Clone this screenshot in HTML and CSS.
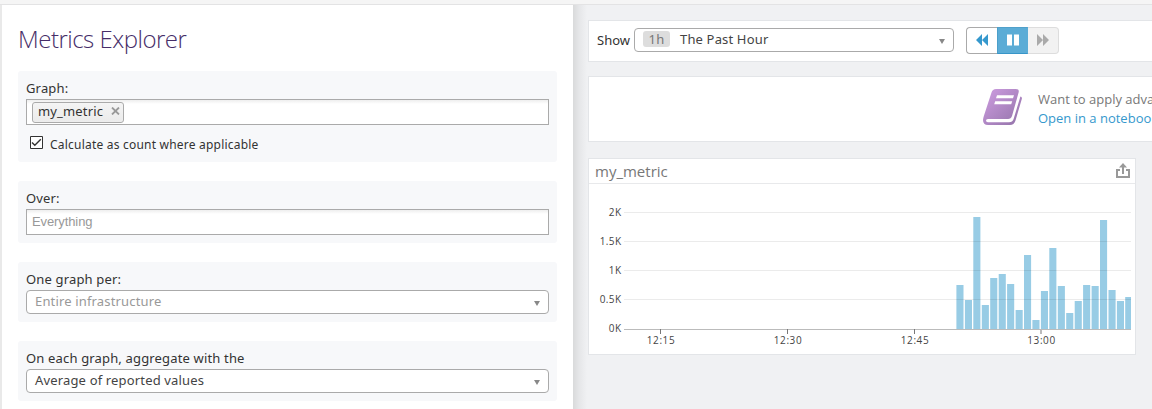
FILE: index.html
```html
<!DOCTYPE html>
<html lang="en">
<head>
<meta charset="utf-8">
<title>Metrics Explorer</title>
<link rel="stylesheet" href="styles.css">
</head>
<body>
<div class="topbar"></div>
<div class="page">
  <main class="editor">
    <h1 class="title">Metrics Explorer</h1>
    <section class="field field-graph">
      <div class="label">Graph:</div>
      <div class="input"><span class="tag"><span class="tag-name">my_metric</span><svg class="tag-x" width="9" height="8" viewBox="0 0 9 8"><path d="M1 .5l7 7M8 .5l-7 7"/></svg></span></div>
      <div class="check"><svg width="13" height="13" viewBox="0 0 13 13"><path class="box" d="M.5 .5h12v12H.5z"/><path class="tick" d="M2 6.500L4.800 9.200l6-6"/></svg><span class="check-text">Calculate as count where applicable</span></div>
    </section>
    <section class="field field-over">
      <div class="label">Over:</div>
      <div class="input"><span class="placeholder">Everything</span></div>
    </section>
    <section class="field">
      <div class="label">One graph per:</div>
      <div class="select"><span class="muted">Entire infrastructure</span><i class="caret"></i></div>
    </section>
    <section class="field">
      <div class="label">On each graph, aggregate with the</div>
      <div class="select"><span class="agg-value">Average of reported values</span><i class="caret"></i></div>
    </section>
  </main>
  <aside class="results">
    <div class="card timebar">
      <span class="show">Show</span>
      <div class="select range"><span class="badge">1h</span><span class="range-text">The Past Hour</span><i class="caret"></i></div>
      <div class="controls">
        <span class="btn back"><svg width="12" height="12" viewBox="0 0 12 12"><path d="M6 0v12L0 6zM12 0v12L6 6z"/></svg></span>
        <span class="btn pause"><svg width="12" height="12" viewBox="0 0 12 12"><path d="M0 .5h5v11H0zM7 .5h5v11H7z"/></svg></span>
        <span class="btn next"><svg width="12" height="12" viewBox="0 0 12 12"><path d="M0 0v12l6-6zM6 0v12l6-6z"/></svg></span>
      </div>
    </div>
    <div class="card notebook">
      <svg class="book" width="40" height="37" viewBox="0 0 40 37">
        <defs><linearGradient id="violet" x1="0" y1="0" x2="1" y2="1"><stop offset="0" stop-color="#cf9ee2"/><stop offset="1" stop-color="#9272a8"/></linearGradient></defs>
        <path fill="url(#violet)" d="M13 0h20q3.500 0 2.600 3.500L29 27q-1 3-4 3H5q-2 0-2 1.600T5 33.200h21q3.500 0 4.500-3L37.400 7.500q2 .5 1.400 2.500L32.500 31.500Q31 36 27 36H5Q0 36 0 31q0-1.500 1-4.500L8.500 3.500Q9.500 0 13 0z"/>
        <path fill="#fff" d="M14 6.300h17l-1 2.900H13zM12.200 12.300h17l-1 2.900h-17z"/>
      </svg>
      <div class="promo"><span class="want">Want to apply adva</span><span class="open">Open in a noteboo</span></div>
    </div>
    <div class="card chart-card">
      <div class="chart-head"><span class="chart-title">my_metric</span>
        <svg class="share" width="16" height="16" viewBox="0 0 16 16"><path class="tray" d="M5 7H2v7h12V7h-3"/><path class="tray" d="M8 11V3"/><path class="tip" d="M8 0l4 4.500H4z"/></svg>
      </div>
      <svg class="chart" width="546" height="170" viewBox="589 184 546 170">
        <g class="bars">
          <path d="M956.400 285h7.100v44h-7.100zM964.900 300h7.100v29h-7.100zM973.300 217h7.100v112h-7.100zM981.800 305h7.100v24h-7.100zM990.200 278h7.100v51h-7.100zM998.700 274h7.100v55h-7.100zM1007.100 284h7.100v45h-7.100zM1015.600 310h7.100v19h-7.100zM1024 255h7.100v74h-7.100zM1032.400 320h7.100v9h-7.100zM1040.900 291h7.100v38h-7.100zM1049.300 248h7.100v81h-7.100zM1057.800 286h7.100v43h-7.100zM1066.200 313h7.100v16h-7.100zM1074.700 301h7.100v28h-7.100zM1083.100 285h7.100v44h-7.100zM1091.600 286h7.100v43h-7.100zM1100 220h7.100v109h-7.100zM1108.500 290h7.100v39h-7.100zM1116.900 301h7.100v28h-7.100zM1125.200 297h5.800v32h-5.800z"/>
        </g>
        <path class="grid" d="M624 212.500h507M624 241.500h507M624 270.500h507M624 299.500h507"/>
        <path class="axis" d="M624 329.500h507"/>
        <path class="ticks" d="M660.500 329v5M787.500 329v5M914.500 329v5"/>
        <path class="tick-soft" d="M1041 329v5"/>
        <g class="ylab"><text x="621.500" y="216">2K</text><text x="621.500" y="245">1.5K</text><text x="621.500" y="274">1K</text><text x="621.500" y="303">0.5K</text><text x="621.500" y="332">0K</text></g>
        <g class="xlab"><text x="661" y="344">12:15</text><text x="788" y="344">12:30</text><text x="915" y="344">12:45</text><text x="1041.500" y="344">13:00</text></g>
      </svg>
    </div>
  </aside>
</div>
</body>
</html>
```
FILE: styles.css
```css
* { box-sizing: border-box; }
body { margin: 0; width: 1152px; height: 409px; overflow: hidden; background: #f0f1f3; color: #333; font: 13px/16px "Noto Sans", "Open Sans", sans-serif; letter-spacing: .16px; white-space: nowrap; }
svg { display: block; flex: none; }
.topbar { height: 5px; background: #f5f5f5; border-bottom: 1px solid #e3e3e4; }
.page { display: flex; height: 404px; }
.editor { width: 573px; flex: none; padding: 0 16px; border-left: 2px solid #e9e9e9; background: #fff; }
.title { margin: 0; height: 66px; padding-top: 18px; font: 300 24px/32px "Open Sans", sans-serif; letter-spacing: -.5px; color: #462d68; }
.field { height: 60px; margin-bottom: 19px; padding: 9px 8px 0; border-radius: 3px; background: #f7f8fa; }
.field-graph { height: 91px; }
.field-over { height: 62px; }
.label { height: 19px; line-height: 16px; }
.input { height: 26px; display: flex; align-items: center; border: 1px solid #aaa; background: linear-gradient(#eee, #fff 4px); padding-left: 5px; }
.tag { height: 21px; width: 92px; display: flex; justify-content: space-between; padding: 0 3px 0 5px; border: 1px solid #aaa; border-radius: 3px; background: linear-gradient(#f4f4f4, #ebebeb); box-shadow: inset 0 0 1px #fff; }
.tag-name { line-height: 17px; }
.tag-x { margin-top: 4px; stroke: #999; stroke-width: 1.8; fill: none; }
.placeholder { font: 13px/20px "Liberation Sans", sans-serif; letter-spacing: -.1px; color: #999; margin-bottom: 1px; }
.check { display: flex; padding: 11px 0 0 4px; gap: 7px; }
.check svg { fill: #fff; stroke: #333; }
.check .tick { stroke-width: 1.4; fill: none; }
.check-text { font-size: 12px; line-height: 17px; letter-spacing: .21px; }
.select { height: 24px; display: flex; align-items: center; border: 1px solid #aaa; border-radius: 4px; background: #fff; padding: 0 8px; color: #444; }
.select > span { margin-top: -2px; }
.muted { color: #999; }
.caret { margin-left: auto; border: solid transparent; border-width: 5px 3px 0; border-top-color: #888; margin-top: 2px; }
.results { flex: 1; min-width: 0; padding: 15px 0 0 15px; background: linear-gradient(90deg, #d9dadb, #e5e6e8 6px, #f0f1f3 14px); }
.card { width: 580px; border: 1px solid #e3e5e8; background: #fff; }
.timebar { height: 42px; margin-bottom: 14px; display: flex; align-items: center; padding: 0 0 2px 8px; }
.show { width: 37px; letter-spacing: 0; }
.range { width: 320px; }
.badge { width: 27px; height: 16px; border-radius: 3px; background: #ddd; color: #777; text-align: center; line-height: 16px; margin-right: 10px; }
.controls { display: flex; margin-left: 12px; height: 27px; }
.btn { width: 31px; display: flex; align-items: center; justify-content: center; border: 1px solid #aaa; }
.back { fill: #3598cd; border-right: 0; border-radius: 4px 0 0 4px; }
.pause { fill: #fff; background: #5bacd6; border-color: #50a0ca #5bacd6 #3795c8 #4b9fca; }
.next { fill: #aaa; background: #f2f2f2; border-color: #ddd; border-left: 0; border-radius: 0 4px 4px 0; }
.notebook { height: 66px; margin-bottom: 16px; padding: 12px 0 0 394px; display: flex; }
.promo { margin: 1px 0 0 15px; display: flex; flex-direction: column; font: 13px/19px "Open Sans", sans-serif; letter-spacing: 0; color: #777; }
.open { color: #3598cd; }
.chart-card { width: 548px; height: 197px; }
.chart-head { height: 25px; display: flex; justify-content: space-between; border-bottom: 1px solid #e8e9eb; padding: 0 4px 0 6px; }
.chart-title { font: 15px/25px "Open Sans", sans-serif; letter-spacing: 0; color: #777; }
.share { margin-top: 4px; fill: none; }
.tray { stroke: #999; stroke-width: 2; }
.tip { fill: #999; }
.grid { stroke: #000; stroke-opacity: .08; }
.bars { fill: #98cce5; }
.axis { stroke: #bbb; }
.ticks { stroke: #777; }
.tick-soft { stroke: #bbb; stroke-width: 2; }
.ylab, .xlab { font: 10px "Open Sans", sans-serif; fill: #444; }
.ylab { text-anchor: end; letter-spacing: .4px; }
.xlab { text-anchor: middle; letter-spacing: .6px; }
```
